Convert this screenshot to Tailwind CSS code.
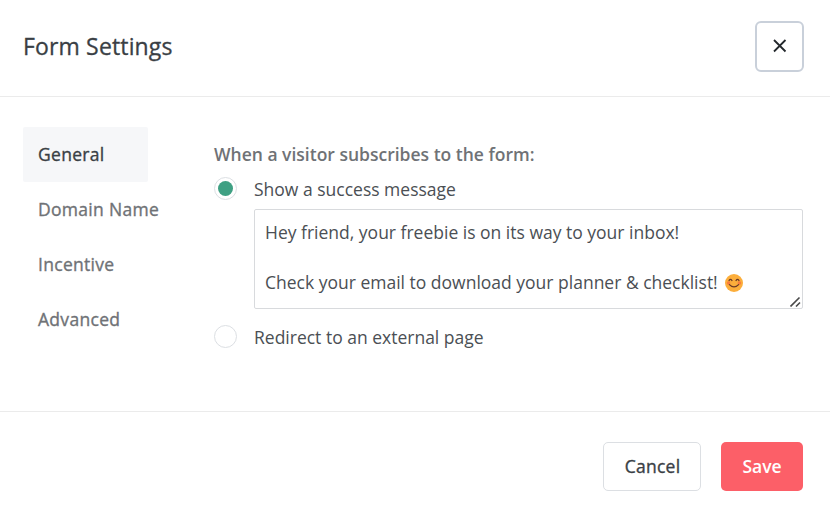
<!DOCTYPE html>
<html lang="en">

<head>
    <meta charset="UTF-8">
    <meta name="viewport" content="width=device-width, initial-scale=1.0">
    <title>Form Settings</title>
    <script src="https://cdn.jsdelivr.net/npm/@tailwindcss/browser@4"></script>
</head>

<body class="font-['Open_Sans','Noto_Sans',sans-serif] bg-white text-[#3a3f45] h-screen flex flex-col overflow-hidden">

    <header class="flex items-center justify-between h-[97px] shrink-0 pl-[23px] pr-[26px] pb-1 border-b border-[#ebebeb]">
        <h1 class="text-[23px] font-medium tracking-[0.15px] [-webkit-text-stroke:0.3px]">Form Settings</h1>
        <button aria-label="Close" class="w-[49px] h-[51px] flex items-center justify-center rounded-md border-2 border-[#c9d0da]">
            <svg class="w-3.5 h-3.5" viewBox="0 0 14 14" fill="none" stroke="#23282c" stroke-width="1.8">
                <path d="M1 1l11.5 11.5M12.5 1l-11.5 11.5" />
            </svg>
        </button>
    </header>

    <main class="flex h-[315px] shrink-0 pl-[23px] pr-[27px] pt-[30px] border-b border-[#ebebeb]">
        <!-- tabs -->
        <nav class="w-[125px] shrink-0 text-[17.5px] font-medium tracking-[0.3px] [-webkit-text-stroke:0.35px] text-[#6f7276] whitespace-nowrap">
            <a class="flex items-center h-[55px] pl-[15px] bg-[#f6f7f9] text-[#3a3f45] rounded-xs">General</a>
            <a class="flex items-center h-[55px] pl-[15px]">Domain Name</a>
            <a class="flex items-center h-[55px] pl-[15px]">Incentive</a>
            <a class="flex items-center h-[55px] pl-[15px]">Advanced</a>
        </nav>

        <section class="flex-1 ml-[66px] pt-[15px] text-[17.5px] text-[#4b4f54]">
            <p class="font-semibold leading-6 text-[#6f7276]">When a visitor subscribes to the form:</p>

            <div class="flex items-center h-[43px] pt-0.5">
                <span class="w-[23px] h-[23px] flex items-center justify-center rounded-full border border-[#dcdfe3]">
                    <span class="w-[15px] h-[15px] rounded-full bg-[#3fa083]"></span>
                </span>
                <span class="ml-[17px] pt-px">Show a success message</span>
            </div>

            <div class="relative ml-10 h-[100px] pl-2.5 pt-[10px] border border-[#d8dadd] rounded-xs leading-[25px]">
                <p>Hey friend, your freebie is on its way to your inbox!</p>
                <p class="mt-[25px] flex items-center">Check your email to download your planner &amp; checklist!
                    <svg class="w-[18px] h-[18px] ml-[7px]" viewBox="0 0 18 18" fill="none">
                        <circle cx="9" cy="9" r="9" fill="#fcae3b" />
                        <circle cx="3.6" cy="9" r="1.8" fill="#f97a3e" />
                        <circle cx="14.4" cy="9" r="1.8" fill="#f97a3e" />
                        <path d="M4 6.6q1.5-2.4 3 0M11 6.6q1.5-2.4 3 0M4.4 10.6q4.6 4.6 9.2 0" stroke="#6d3a25" stroke-width="1.2" stroke-linecap="round" />
                    </svg>
                </p>
                <!-- resize grip -->
                <svg class="absolute right-px bottom-px w-[11px] h-[11px]" viewBox="0 0 11 11" fill="none" stroke="#4a4a4a" stroke-width="1.6">
                    <path d="M.5 10.5l9-9M6 10.5l4-4" />
                </svg>
            </div>

            <div class="flex items-center h-[54px]">
                <span class="w-[23px] h-[23px] rounded-full border border-[#dcdfe3]"></span>
                <span class="ml-[17px] pt-0.5">Redirect to an external page</span>
            </div>
        </section>
    </main>

    <footer class="flex justify-end gap-5 pt-[30px] pr-[27px] text-[17.5px]">
        <button class="w-[98px] h-[49px] rounded-[5px] border border-[#dcdfe3] font-medium tracking-[0.27px] [-webkit-text-stroke:0.35px] pl-px">Cancel</button>
        <button class="w-[82px] h-[49px] rounded-[5px] bg-[#fc5f68] text-white font-semibold">Save</button>
    </footer>

</body>
</html>
